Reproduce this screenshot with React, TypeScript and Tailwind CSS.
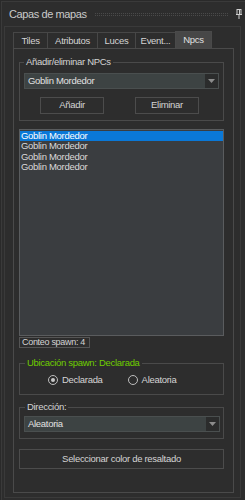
import React from "react";

function Combo({ text, w }: { text: string; w: string }) {
  return (
    <div className={`${w} h-[16px] flex bg-[#3d4343] border border-[#4a4f4f]`}>
      <div className="flex-1 flex items-center pl-[3px] text-[9.5px] leading-[10px] text-[#e2e2e2]">{text}</div>
      <div className="w-[13px] h-full bg-[#2b2c2c] flex items-center justify-center">
        <svg width="7" height="4" viewBox="0 0 7 4">
          <path d="M0 0 L7 0 L3.5 4 Z" fill="#8c8c8c" />
        </svg>
      </div>
    </div>
  );
}

function Radio({ checked, label }: { checked?: boolean; label: string }) {
  return (
    <div className="flex items-center gap-[4px]">
      <div className="w-[10px] h-[10px] rounded-full border border-[#bdbdbd] flex items-center justify-center">
        {checked && <div className="w-[4px] h-[4px] rounded-full bg-[#c8c8c8]" />}
      </div>
      <span className="text-[9.5px] leading-[10px]">{label}</span>
    </div>
  );
}

export default function App() {
  const tabs = [
    { t: "Tiles", w: "w-[35px]" },
    { t: "Atributos", w: "w-[51px]" },
    { t: "Luces", w: "w-[39px]" },
    { t: "Event...", w: "w-[41px]" },
  ];
  return (
    <div className="w-[245px] h-[500px] bg-[#2a2a2a] overflow-hidden font-['Liberation_Sans',Arial,sans-serif] tracking-[-0.3px] text-[#d4d4d4] whitespace-nowrap">
      <div className="ml-[1px] mt-[1px] h-[499px] border-l border-t border-[#3a3a3a] bg-[#2d2d2d] flex flex-col">
        {/* title */}
        <div className="h-[24px] flex items-center pl-[7px] pr-[2px] shrink-0">
          <span className="shrink-0 text-[11px] tracking-[-0.4px] text-[#cacaca] leading-[11px]">Capas de mapas</span>
          <div className="ml-[8px] w-[133px] h-[3px] border-y border-dotted border-[#4a4a4a]" />
          <div className="flex-1" />
          <svg width="6" height="10" viewBox="0 0 6 10" className="mr-[1px] shrink-0">
            <rect x="1" y="0.5" width="4" height="5" fill="none" stroke="#d0d0d0" strokeWidth="1" />
            <rect x="3" y="1" width="1" height="4" fill="#d0d0d0" />
            <rect x="0" y="5" width="6" height="1" fill="#d0d0d0" />
            <rect x="2.5" y="6" width="1" height="4" fill="#d0d0d0" />
          </svg>
        </div>
        {/* frame */}
        <div className="ml-[2px] w-[237px] h-[472px] border border-[#3a3a3a] pt-[4px] pl-[8px] flex flex-col">
          {/* tabs */}
          <div className="flex items-end h-[17px]">
            {tabs.map((tb, i) => (
              <div
                key={tb.t}
                className={`${tb.w} h-[16px] ${i > 0 ? "-ml-px" : ""} border-l border-r border-t border-[#474747] bg-[#2d2d2d] flex items-center justify-center text-[9.5px] leading-[10px] text-[#d4d4d4]`}
              >
                {tb.t}
              </div>
            ))}
            <div className="w-[37px] h-[17px] -ml-px border-l border-r border-t border-[#4a4a4a] bg-[#474747] flex items-center justify-center text-[9.5px] leading-[10px] text-[#e0e0e0]">
              Npcs
            </div>
          </div>
          {/* panel */}
          <div className="w-[221px] h-[445px] border border-[#4a4a4a] pl-[5px] flex flex-col">
            {/* group 1 */}
            <div className="relative mt-[13px] w-[205px] h-[59px] border border-[#4a4a4a] px-[4px] pt-[10px]">
              <span className="absolute left-[4px] -top-[6px] px-[2px] bg-[#2d2d2d] text-[9.5px] leading-[10px]">Añadir/eliminar NPCs</span>
              <Combo text="Goblin Mordedor" w="w-[195px]" />
              <div className="flex mt-[8px] ml-[16px] gap-[31px]">
                <div className="w-[64px] h-[17px] border border-[#4c4c4c] flex items-center justify-center text-[9.5px]">Añadir</div>
                <div className="w-[64px] h-[17px] border border-[#4c4c4c] flex items-center justify-center text-[9.5px]">Eliminar</div>
              </div>
            </div>
            {/* listbox */}
            <div className="mt-[8px] w-[205px] h-[207px] border border-[#5a5c5e] bg-[#3a3d40] pt-[1px] text-[9.5px] leading-[10.5px]">
              <div className="bg-[#0a78d7] text-white pl-[1px] h-[10px] leading-[10px]">Goblin Mordedor</div>
              <div className="pl-[1px] text-[#dadada]">Goblin Mordedor</div>
              <div className="pl-[1px] text-[#dadada]">Goblin Mordedor</div>
              <div className="pl-[1px] text-[#dadada]">Goblin Mordedor</div>
            </div>
            <div className="mt-[1px] w-[71px] h-[11px] border border-[#555] flex items-center pl-[2px] text-[9px] leading-[9px]">Conteo spawn: 4</div>
            {/* group 2 */}
            <div className="relative mt-[15px] w-[205px] h-[32px] border border-[#4a4a4a] flex items-center">
              <span className="absolute left-[5px] -top-[6px] px-[2px] bg-[#2d2d2d] text-[9.5px] leading-[10px] text-[#6fce00]">Ubicación spawn: Declarada</span>
              <div className="ml-[28px] mt-[1px]">
                <Radio checked label="Declarada" />
              </div>
              <div className="ml-[25px] mt-[1px]">
                <Radio label="Aleatoria" />
              </div>
            </div>
            {/* group 3 */}
            <div className="relative mt-[12px] w-[205px] h-[32px] border border-[#4a4a4a] px-[4px] pt-[8px]">
              <span className="absolute left-[5px] -top-[6px] px-[2px] bg-[#2d2d2d] text-[9.5px] leading-[10px]">Dirección:</span>
              <Combo text="Aleatoria" w="w-[196px]" />
            </div>
            <div className="mt-[10px] w-[205px] h-[20px] border border-[#4c4c4c] flex items-center justify-center text-[9.5px]">
              Seleccionar color de resaltado
            </div>
          </div>
        </div>
      </div>
    </div>
  );
}
